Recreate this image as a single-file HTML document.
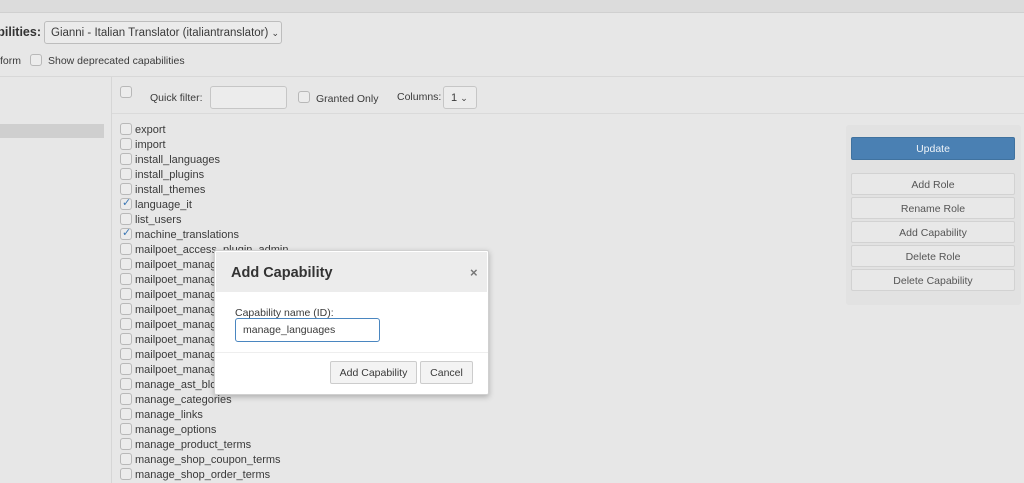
<!DOCTYPE html>
<html><head><style>
*{box-sizing:border-box;margin:0;padding:0}
html,body{width:1024px;height:483px;overflow:hidden}
body{background:#e7e7e7;font-family:"Liberation Sans",sans-serif;color:#3a3a3a;position:relative}
.a{position:absolute}
.cb{position:absolute;width:12px;height:12px;border:1px solid #b8b8b8;border-radius:3px;background:#ececec}
.it{position:absolute;left:120px;height:15px;font-size:11px;line-height:15px}
.it .cb{left:0;top:1px}
.it span{position:absolute;left:15px;top:1px;white-space:nowrap}
.btn{position:absolute;left:851px;width:164px;height:22px;border:1px solid #d2d2d2;border-radius:2px;background:#e8e8e8;font-size:10.5px;color:#555;text-align:center;line-height:22px}
.chk{position:absolute;left:2px;top:-1px;color:#3d78b5;font-size:11px;font-weight:normal}
</style></head><body>
<div class="a" style="left:0;top:0;width:1024px;height:13px;background:#dcdcdc;border-bottom:1px solid #d0d0d0"></div>
<div class="a" style="left:0;top:25px;width:41px;height:18px;overflow:hidden"><span class="a" style="right:0;top:0;white-space:nowrap;font-size:12.5px;font-weight:bold;color:#333">Capabilities:</span></div>
<div class="a" style="left:44px;top:21px;width:238px;height:23px;border:1px solid #bdbdbd;border-radius:3px;background:#ebebeb;font-size:11.5px;line-height:22px;padding-left:6px">Gianni - Italian Translator (italiantranslator) <span style="font-size:9px">&#8964;</span></div>
<div class="a" style="left:0;top:55px;font-size:10.5px">form</div>
<div class="cb" style="left:30px;top:54px"></div>
<div class="a" style="left:48px;top:55px;font-size:10.5px">Show deprecated capabilities</div>
<div class="a" style="left:0;top:76px;width:1024px;height:1px;background:#d8d8d8"></div>
<div class="a" style="left:111px;top:77px;width:1px;height:406px;background:#d6d6d6"></div>
<div class="a" style="left:112px;top:113px;width:912px;height:1px;background:#dadada"></div>
<div class="a" style="left:0;top:124px;width:104px;height:14px;background:#cfcfcf"></div>
<div class="cb" style="left:120px;top:86px"></div>
<div class="a" style="left:150px;top:92px;font-size:10.5px">Quick filter:</div>
<div class="a" style="left:210px;top:86px;width:77px;height:23px;border:1px solid #c6c6c6;border-radius:3px;background:#ececec"></div>
<div class="cb" style="left:298px;top:91px"></div>
<div class="a" style="left:316px;top:93px;font-size:10.5px">Granted Only</div>
<div class="a" style="left:397px;top:91px;font-size:10.5px">Columns:</div>
<div class="a" style="left:443px;top:86px;width:34px;height:23px;border:1px solid #c6c6c6;border-radius:3px;background:#ececec;font-size:11px;line-height:22px;padding-left:7px">1 <span style="font-size:9px">&#8964;</span></div>

<div class="it" style="top:111px;height:5px;overflow:hidden"><div class="cb" style="top:-8px"></div></div>
<div class="it" style="top:122px"><div class="cb"></div><span>export</span></div>
<div class="it" style="top:137px"><div class="cb"></div><span>import</span></div>
<div class="it" style="top:152px"><div class="cb"></div><span>install_languages</span></div>
<div class="it" style="top:167px"><div class="cb"></div><span>install_plugins</span></div>
<div class="it" style="top:182px"><div class="cb"></div><span>install_themes</span></div>
<div class="it" style="top:197px"><div class="cb"></div><b class="chk">&#10003;</b><span>language_it</span></div>
<div class="it" style="top:212px"><div class="cb"></div><span>list_users</span></div>
<div class="it" style="top:227px"><div class="cb"></div><b class="chk">&#10003;</b><span>machine_translations</span></div>
<div class="it" style="top:242px"><div class="cb"></div><span>mailpoet_access_plugin_admin</span></div>
<div class="it" style="top:257px"><div class="cb"></div><span>mailpoet_manage</span></div>
<div class="it" style="top:272px"><div class="cb"></div><span>mailpoet_manage</span></div>
<div class="it" style="top:287px"><div class="cb"></div><span>mailpoet_manage</span></div>
<div class="it" style="top:302px"><div class="cb"></div><span>mailpoet_manage</span></div>
<div class="it" style="top:317px"><div class="cb"></div><span>mailpoet_manage</span></div>
<div class="it" style="top:332px"><div class="cb"></div><span>mailpoet_manage</span></div>
<div class="it" style="top:347px"><div class="cb"></div><span>mailpoet_manage</span></div>
<div class="it" style="top:362px"><div class="cb"></div><span>mailpoet_manage</span></div>
<div class="it" style="top:377px"><div class="cb"></div><span>manage_ast_bloc</span></div>
<div class="it" style="top:392px"><div class="cb"></div><span>manage_categories</span></div>
<div class="it" style="top:407px"><div class="cb"></div><span>manage_links</span></div>
<div class="it" style="top:422px"><div class="cb"></div><span>manage_options</span></div>
<div class="it" style="top:437px"><div class="cb"></div><span>manage_product_terms</span></div>
<div class="it" style="top:452px"><div class="cb"></div><span>manage_shop_coupon_terms</span></div>
<div class="it" style="top:467px"><div class="cb"></div><span>manage_shop_order_terms</span></div>

<div class="a" style="left:846px;top:125px;width:175px;height:180px;background:#e2e2e2;border-radius:3px"></div>
<div class="btn" style="top:137px;height:23px;background:#4a80b3;border-color:#40729f;color:#eef3f8;line-height:22px">Update</div>
<div class="btn" style="top:173px">Add Role</div>
<div class="btn" style="top:197px">Rename Role</div>
<div class="btn" style="top:221px">Add Capability</div>
<div class="btn" style="top:245px">Delete Role</div>
<div class="btn" style="top:269px">Delete Capability</div>

<div class="a" style="left:214px;top:250px;width:275px;height:145px;background:#fff;border:1px solid #d0d0d0;border-radius:2px;box-shadow:0 2px 6px rgba(0,0,0,.25)">
 <div class="a" style="left:1px;top:1px;width:271px;height:40px;background:#ececec"></div>
 <div class="a" style="left:16px;top:14px;font-size:14.5px;font-weight:bold;color:#333">Add Capability</div>
 <div class="a" style="left:255px;top:14px;font-size:13px;font-weight:bold;color:#777">&#215;</div>
 <div class="a" style="left:20px;top:56px;font-size:10.5px">Capability name (ID):</div>
 <div class="a" style="left:20px;top:67px;width:145px;height:24px;border:1.5px solid #4a86c0;border-radius:3px;font-size:10.5px;line-height:22px;padding-left:7px">manage_languages</div>
 <div class="a" style="left:0;top:101px;width:273px;height:1px;background:#eee"></div>
 <div class="a" style="left:115px;top:110px;width:87px;height:23px;border:1px solid #ccc;border-radius:2px;background:#f3f3f3;font-size:10.5px;text-align:center;line-height:22px">Add Capability</div>
 <div class="a" style="left:205px;top:110px;width:53px;height:23px;border:1px solid #ccc;border-radius:2px;background:#f3f3f3;font-size:10.5px;text-align:center;line-height:22px">Cancel</div>
</div>
</body></html>
